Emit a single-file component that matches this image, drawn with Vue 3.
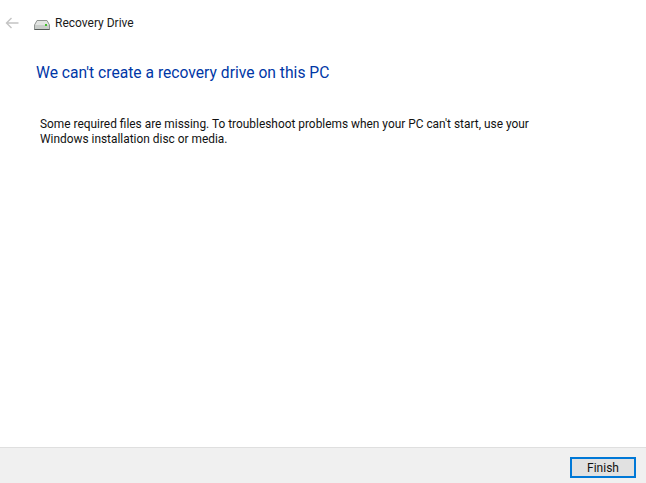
<script setup>
const title = "Recovery Drive";
</script>

<template>
  <div class="window">
    <header class="top">
      <svg class="back" width="14" height="12" viewBox="0 0 14 12" aria-hidden="true">
        <path d="M6.500 1 1.500 6l5 5M1.500 6H13.500" fill="none" stroke="#c4c4c4" stroke-width="1.400" />
      </svg>
      <svg class="drive" width="16" height="10" viewBox="0 0 16 10" aria-hidden="true">
        <path d="M3 .5h10l2.500 4.500v4.500H.5V5z" fill="#e2e4e2" stroke="#8f9491" />
        <rect x="1" y="5" width="14" height="4" fill="#c9cdca" />
        <path d="M.5 9.500h15" stroke="#555a58" />
        <rect x="11" y="4" width="2" height="2" fill="#3fbf2a" />
      </svg>
      <span class="title">{{ title }}</span>
    </header>
    <main class="content">
      <h1 class="heading">We can't create a recovery drive on this PC</h1>
      <p class="body">Some required files are missing. To troubleshoot problems when your PC can't start, use your<br />Windows installation disc or media.</p>
    </main>
    <footer class="bottom">
      <button class="finish" type="button">Finish</button>
    </footer>
  </div>
</template>

<style>
html, body { margin: 0; background: #fff; }
</style>

<style scoped>
.window {
  width: 646px;
  height: 483px;
  display: flex;
  flex-direction: column;
  background: #fff;
  font-family: Roboto, "Open Sans", sans-serif;
  overflow: hidden;
}
.top {
  display: flex;
  align-items: center;
  height: 46px;
  padding-left: 5px;
  box-sizing: border-box;
}
.back { margin-right: 15px; }
.drive { margin-right: 5px; margin-top: 3px; }
.title { font-size: 12px; color: #1a1a1a; }
.content { flex: 1; padding-left: 36px; }
.heading {
  margin: 16px 0 0;
  font-size: 15.650px;
  line-height: 21px;
  font-weight: 400;
  color: #0037a6;
}
.body {
  margin: 34px 0 0 4px;
  font-size: 11.900px;
  line-height: 15px;
  color: #111;
}
.bottom {
  height: 36px;
  box-sizing: border-box;
  border-top: 1px solid #dfdfdf;
  background: #f0f0f0;
  display: flex;
  justify-content: flex-end;
  align-items: flex-start;
  padding: 9px 10px 0 0;
}
.finish {
  width: 66px;
  height: 21px;
  padding: 0;
  border: 2px solid #0078d7;
  background: #e1e1e1;
  font: 12px Roboto, "Open Sans", sans-serif;
  color: #111;
}
</style>
